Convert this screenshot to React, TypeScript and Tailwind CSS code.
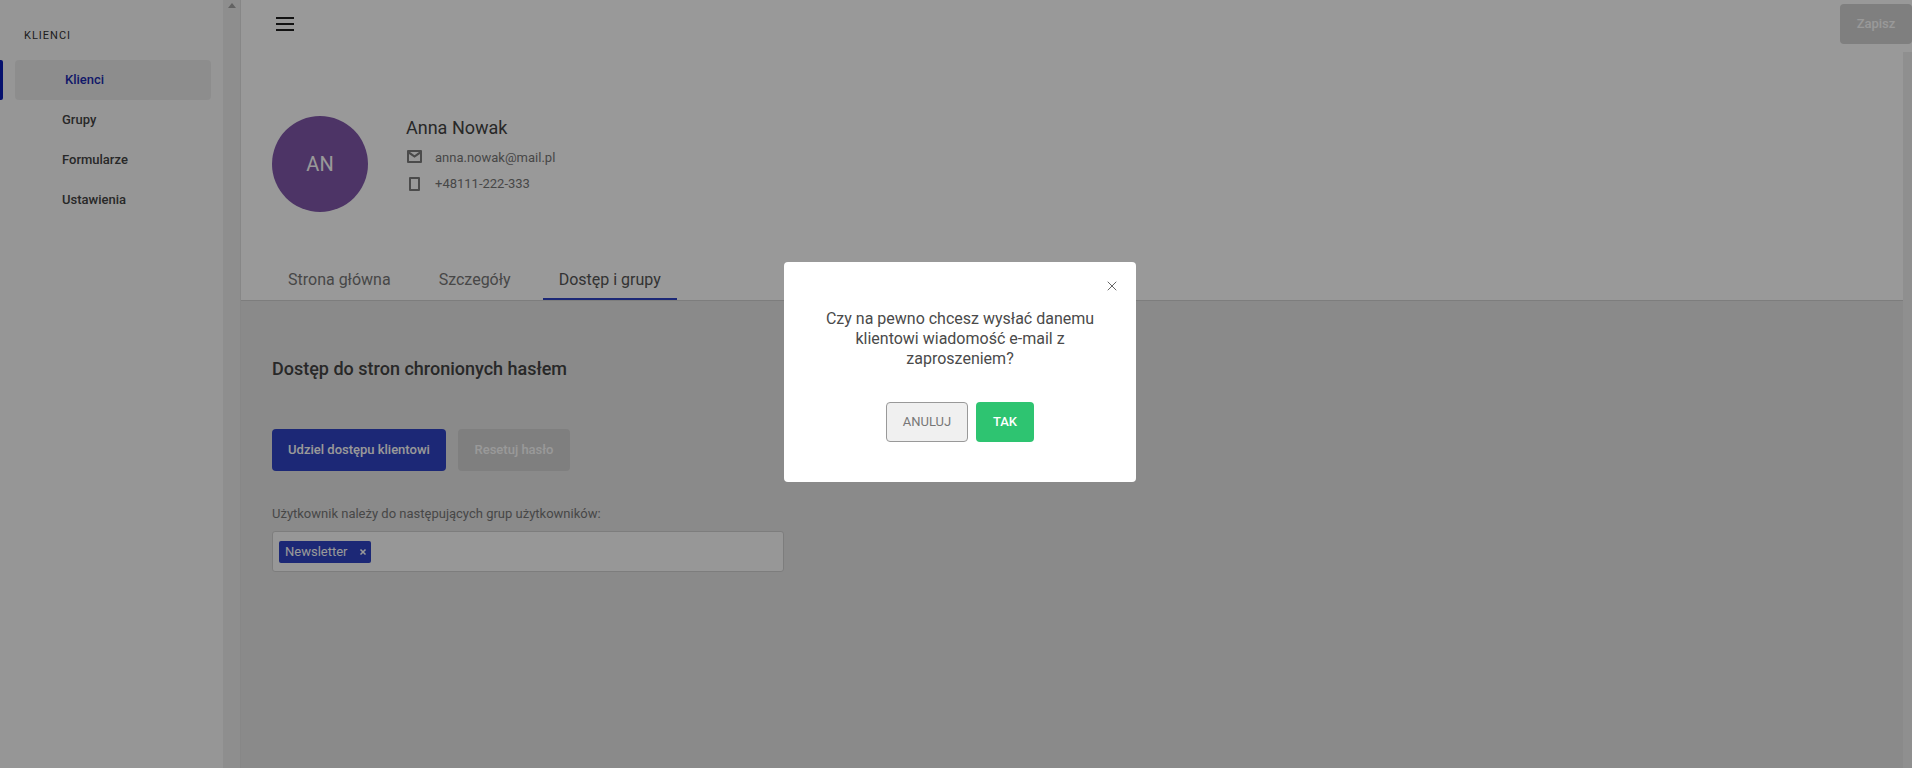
import { X } from "lucide-react";

const navItems = ["Grupy", "Formularze", "Ustawienia"];

const Sidebar = () => {
    return (
        <aside className="flex w-[241px] shrink-0">
            <div className="w-[223px] bg-[#fbfbfb] pt-[29px]">
                <h3 className="pl-[24px] text-[11px] leading-[14px] tracking-[1px] text-[#333]">KLIENCI</h3>
                <nav className="relative mt-[10px]">
                    <div className="absolute left-0 top-[7px] h-[40px] w-[3px] rounded-r-[2px] bg-[#0a1db8]"></div>
                    <div className="pl-[15px] pr-[12px] pt-[7px]">
                        <a className="flex h-[40px] items-center rounded-[4px] bg-[#ececec] pl-[50px] text-[13px] font-medium text-[#1c2bb0]">Klienci</a>
                    </div>
                    {navItems.map((item) => (
                        <a key={item} className="flex h-[40px] items-center pl-[62px] text-[13px] font-medium text-[#444]">{item}</a>
                    ))}
                </nav>
            </div>
            <div className="flex w-[18px] justify-center border-r border-[#e2e2e2] bg-[#ededed] pt-[3px]">
                <div className="h-0 w-0 border-x-[4px] border-b-[5px] border-x-transparent border-b-[#a3a3a3]"></div>
            </div>
        </aside>
    );
};

const TopBar = () => {
    return (
        <div className="flex h-[52px] shrink-0 items-start justify-between bg-white">
            <svg className="ml-[35px] mt-[17px]" width="18" height="14" viewBox="0 0 18 14">
                <path d="M0 0h18v2H0zM0 6h18v2H0zM0 12h18v2H0z" fill="#1f1f1f" />
            </svg>
            <button className="mt-[4px] h-[40px] w-[72px] rounded-[4px] bg-[#d4d4d4] text-[13px] font-medium text-white">Zapisz</button>
        </div>
    );
};

const ProfileHeader = () => {
    return (
        <section className="border-b border-[#d0d0d0] bg-white">
            <div className="flex pl-[31px] pt-[64px]">
                <div className="flex h-[96px] w-[96px] items-center justify-center rounded-full bg-[#8058aa] text-[20px] text-white">AN</div>
                <div className="ml-[38px]">
                    <h1 className="mt-[1px] text-[18px] leading-[22px] text-[#444]">Anna Nowak</h1>
                    <div className="mt-[6px] flex h-[26px] items-center text-[13px] text-[#777]">
                        <svg className="ml-[1px] mt-[-3px]" width="15" height="13" viewBox="0 0 15 13">
                            <path fillRule="evenodd" d="M1 0h13a1 1 0 0 1 1 1v11a1 1 0 0 1-1 1H1a1 1 0 0 1-1-1V1a1 1 0 0 1 1-1zm2 2l4.5 3.2L12 2zm-1 2v7h11V4L7.5 7.8z" fill="#7d7d7d" />
                        </svg>
                        <span className="ml-[13px]">anna.nowak@mail.pl</span>
                    </div>
                    <div className="flex h-[26px] items-center text-[13px] text-[#777]">
                        <svg className="ml-[3px] mt-[-1px]" width="11" height="14" viewBox="0 0 11 14">
                            <path fillRule="evenodd" d="M1 0h9a1 1 0 0 1 1 1v12a1 1 0 0 1-1 1H1a1 1 0 0 1-1-1V1a1 1 0 0 1 1-1zm1 2v10h7V2z" fill="#7d7d7d" />
                        </svg>
                        <span className="ml-[15px]">+48111-222-333</span>
                    </div>
                </div>
            </div>
            <div className="mt-[52px] flex pl-[31px] text-[16px] text-[#777]">
                <a className="flex h-[36px] items-center px-[16px] pb-[4px]">Strona główna</a>
                <a className="ml-[16px] flex h-[36px] items-center px-[16px] pb-[4px]">Szczegóły</a>
                <a className="ml-[16px] flex h-[36px] items-center border-b-2 border-[#2f43c5] px-[16px] pb-[2px] text-[#555]">Dostęp i grupy</a>
            </div>
        </section>
    );
};

const AccessTab = () => {
    return (
        <section className="flex-1 pl-[31px] pt-[57px]">
            <h2 className="text-[18px] font-medium leading-[22px] text-[#444]">Dostęp do stron chronionych hasłem</h2>
            <div className="mt-[49px] flex gap-[12px]">
                <button className="h-[42px] w-[174px] rounded-[4px] bg-[#2f43c5] text-[13px] font-medium text-white">Udziel dostępu klientowi</button>
                <button className="h-[42px] w-[112px] rounded-[4px] bg-[#d4d4d4] text-[13px] font-medium text-white">Resetuj hasło</button>
            </div>
            <p className="mt-[34px] text-[13px] leading-[18px] text-[#777]">Użytkownik należy do następujących grup użytkowników:</p>
            <div className="mt-[8px] flex h-[41px] w-[512px] items-center rounded-[3px] border border-[#d0d0d0] bg-[#fcfcfc] pl-[6px]">
                <span className="flex h-[22px] w-[92px] items-center rounded-[2px] bg-[#2f43c5] pl-[6px] text-[13px] text-white">
                    Newsletter
                    <X className="ml-[11px]" size={8} strokeWidth={5} />
                </span>
            </div>
        </section>
    );
};

const ConfirmDialog = () => {
    return (
        <div className="fixed inset-0 bg-black/40 pl-[784px] pt-[262px]">
            <div className="relative h-[220px] w-[352px] rounded-[4px] bg-white px-[30px] pt-[47px] text-center">
                <X className="absolute right-[16px] top-[16px] text-[#666]" size={16} strokeWidth={1.5} />
                <p className="text-[16px] leading-[20px] text-[#4a4a4a]">Czy na pewno chcesz wysłać danemu klientowi wiadomość e-mail z zaproszeniem?</p>
                <div className="mt-[33px] flex justify-center gap-[8px]">
                    <button className="h-[40px] w-[82px] rounded-[4px] border border-[#999] bg-[#f0f0f0] text-[13px] font-normal text-[#777]">ANULUJ</button>
                    <button className="h-[40px] w-[58px] rounded-[4px] bg-[#2ec471] text-[13px] font-medium text-white">TAK</button>
                </div>
            </div>
        </div>
    );
};

const App = () => {
    return (
        <div className="flex h-[768px] overflow-hidden bg-[#e6e6e6] font-['Roboto',sans-serif]">
            <Sidebar />
            <main className="flex min-w-0 flex-1 flex-col">
                <TopBar />
                <div className="flex min-h-0 flex-1">
                    <div className="flex min-w-0 flex-1 flex-col">
                        <ProfileHeader />
                        <AccessTab />
                    </div>
                    <div className="w-[9px] shrink-0 bg-[#eeeeee]"></div>
                </div>
            </main>
            <ConfirmDialog />
        </div>
    );
};

export default App;
